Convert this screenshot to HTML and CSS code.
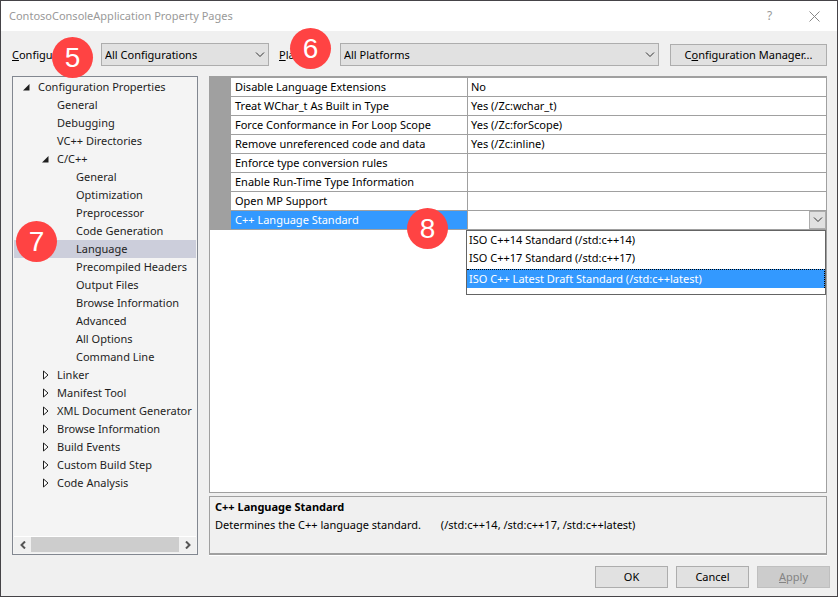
FILE: index.html
```
<!DOCTYPE html>
<html lang="en">
<head>
    <meta charset="utf-8">
    <meta name="viewport" content="width=device-width, initial-scale=1">
    <title>ContosoConsoleApplication Property Pages</title>
    <link rel="stylesheet" href="styles.css">
</head>
<body>
    <div class="dialog">
        <header class="titlebar">
            <h1>ContosoConsoleApplication Property Pages</h1>
            <button type="button" class="caption-btn" aria-label="Help">?</button>
            <button type="button" class="caption-btn" aria-label="Close">
                <svg width="11" height="11" viewBox="0 0 11 11"><path d="M0.5 0.5l10 10M10.5 0.5l-10 10"/></svg>
            </button>
        </header>

        <div class="toolbar">
            <div class="field-label config-label">
                <label for="configuration"><u>C</u>onfiguration:</label>
                <span class="badge badge-5">5</span>
            </div>
            <div class="combo config-combo">
                <select id="configuration">
                    <option>All Configurations</option>
                </select>
                <svg class="chevron" width="10" height="6" viewBox="0 0 10 6"><path d="M1 0.5l4 4 4-4"/></svg>
            </div>
            <div class="field-label platform-label">
                <label for="platform"><u>P</u>latform:</label>
                <span class="badge badge-6">6</span>
            </div>
            <div class="combo platform-combo">
                <select id="platform">
                    <option>All Platforms</option>
                </select>
                <svg class="chevron" width="10" height="6" viewBox="0 0 10 6"><path d="M1 0.5l4 4 4-4"/></svg>
            </div>
            <button type="button" class="btn manager-btn">C<u>o</u>nfiguration Manager...</button>
        </div>

        <main class="content">
            <nav class="tree" aria-label="Property pages">
                <ul class="tree-list">
                    <li class="level-0 open"><button type="button" class="toggle" aria-label="Collapse"></button>Configuration Properties</li>
                    <li class="level-1 leaf">General</li>
                    <li class="level-1 leaf">Debugging</li>
                    <li class="level-1 leaf">VC++ Directories</li>
                    <li class="level-1 open"><button type="button" class="toggle" aria-label="Collapse"></button>C/C++</li>
                    <li class="level-2 leaf">General</li>
                    <li class="level-2 leaf">Optimization</li>
                    <li class="level-2 leaf">Preprocessor</li>
                    <li class="level-2 leaf">Code Generation</li>
                    <li class="level-2 leaf selected">Language<span class="badge badge-7">7</span></li>
                    <li class="level-2 leaf">Precompiled Headers</li>
                    <li class="level-2 leaf">Output Files</li>
                    <li class="level-2 leaf">Browse Information</li>
                    <li class="level-2 leaf">Advanced</li>
                    <li class="level-2 leaf">All Options</li>
                    <li class="level-2 leaf">Command Line</li>
                    <li class="level-1 closed"><button type="button" class="toggle" aria-label="Expand"></button>Linker</li>
                    <li class="level-1 closed"><button type="button" class="toggle" aria-label="Expand"></button>Manifest Tool</li>
                    <li class="level-1 closed"><button type="button" class="toggle" aria-label="Expand"></button>XML Document Generator</li>
                    <li class="level-1 closed"><button type="button" class="toggle" aria-label="Expand"></button>Browse Information</li>
                    <li class="level-1 closed"><button type="button" class="toggle" aria-label="Expand"></button>Build Events</li>
                    <li class="level-1 closed"><button type="button" class="toggle" aria-label="Expand"></button>Custom Build Step</li>
                    <li class="level-1 closed"><button type="button" class="toggle" aria-label="Expand"></button>Code Analysis</li>
                </ul>
                <div class="scrollbar">
                    <button type="button" class="scroll-btn" aria-label="Scroll left">
                        <svg width="6" height="8" viewBox="0 0 6 8"><path d="M5 0.5L1.5 4 5 7.5"/></svg>
                    </button>
                    <div class="scroll-thumb"></div>
                    <button type="button" class="scroll-btn" aria-label="Scroll right">
                        <svg width="6" height="8" viewBox="0 0 6 8"><path d="M1 0.5L4.5 4 1 7.5"/></svg>
                    </button>
                </div>
            </nav>

            <div class="panes">
                <section class="grid-pane">
                    <table class="props">
                        <tr>
                            <td class="gutter"></td>
                            <th scope="row">Disable Language Extensions</th>
                            <td>No</td>
                        </tr>
                        <tr>
                            <td class="gutter"></td>
                            <th scope="row">Treat WChar_t As Built in Type</th>
                            <td>Yes (/Zc:wchar_t)</td>
                        </tr>
                        <tr>
                            <td class="gutter"></td>
                            <th scope="row">Force Conformance in For Loop Scope</th>
                            <td>Yes (/Zc:forScope)</td>
                        </tr>
                        <tr>
                            <td class="gutter"></td>
                            <th scope="row">Remove unreferenced code and data</th>
                            <td>Yes (/Zc:inline)</td>
                        </tr>
                        <tr>
                            <td class="gutter"></td>
                            <th scope="row">Enforce type conversion rules</th>
                            <td></td>
                        </tr>
                        <tr>
                            <td class="gutter"></td>
                            <th scope="row">Enable Run-Time Type Information</th>
                            <td></td>
                        </tr>
                        <tr>
                            <td class="gutter"></td>
                            <th scope="row">Open MP Support</th>
                            <td></td>
                        </tr>
                        <tr class="active">
                            <td class="gutter"></td>
                            <th scope="row"><label for="standard">C++ Language Standard</label><span class="badge badge-8">8</span></th>
                            <td class="editor">
                                <div class="editor-row">
                                    <input type="text" id="standard" value="">
                                    <button type="button" class="drop-btn" aria-label="Show options">
                                        <svg width="10" height="6" viewBox="0 0 10 6"><path d="M1 0.5l4 4 4-4"/></svg>
                                    </button>
                                </div>
                                <ul class="dropdown" role="listbox" aria-label="C++ Language Standard">
                                    <li role="option">ISO C++14 Standard (/std:c++14)</li>
                                    <li role="option">ISO C++17 Standard (/std:c++17)</li>
                                    <li role="option" class="current" aria-selected="true">ISO C++ Latest Draft Standard (/std:c++latest)</li>
                                </ul>
                            </td>
                        </tr>
                    </table>
                </section>

                <section class="description">
                    <h2>C++ Language Standard</h2>
                    <p>Determines the C++ language standard. <span class="switches">(/std:c++14, /std:c++17, /std:c++latest)</span></p>
                </section>
            </div>
        </main>

        <footer class="actions">
            <button type="button" class="btn">OK</button>
            <button type="button" class="btn">Cancel</button>
            <button type="button" class="btn" disabled><u>A</u>pply</button>
        </footer>
    </div>
</body>
</html>
```
FILE: styles.css
```
* {
    box-sizing: border-box;
}
body {
    margin: 0;
    font-family: "Noto Sans", "Open Sans", sans-serif;
    font-size: 11px;
    line-height: 18px;
    color: #000;
}
button, select, input {
    font: inherit;
    color: inherit;
    margin: 0;
    padding: 0;
    border-radius: 0;
}
ul {
    list-style: none;
    margin: 0;
    padding: 0;
}
svg {
    display: block;
    fill: none;
    stroke: #333;
}
.dialog {
    display: flex;
    flex-direction: column;
    min-height: 100vh;
    background: #f0f0f0;
    border: 1px solid #454347;
}

/* title bar */
.titlebar {
    display: flex;
    align-items: center;
    height: 30px;
    padding-left: 8px;
    background: #fff;
    color: #999;
}
.titlebar h1 {
    flex: 1;
    margin: 0;
    font-size: 11px;
    font-weight: 400;
}
.caption-btn {
    display: flex;
    align-items: center;
    justify-content: center;
    width: 45px;
    height: 30px;
    border: none;
    background: none;
    font-size: 12px;
}
.caption-btn svg {
    stroke: #888;
}

/* configuration and platform row */
.toolbar {
    display: flex;
    align-items: center;
    padding: 12px 10px 10px 11px;
}
.field-label {
    position: relative;
}
.config-label {
    width: 89px;
}
.platform-label {
    width: 61px;
    margin-left: 10px;
}
.combo {
    position: relative;
}
.config-combo {
    width: 168px;
}
.platform-combo {
    flex: 1;
    margin-right: 11px;
}
.combo select {
    display: block;
    width: 100%;
    height: 23px;
    padding: 0 20px 0 3px;
    border: 1px solid #adadad;
    background: #e1e1e1;
    appearance: none;
}
.chevron {
    position: absolute;
    top: 9px;
    right: 4px;
    pointer-events: none;
}
.btn {
    width: 73px;
    height: 22px;
    border: 1px solid #adadad;
    background: #e1e1e1;
    line-height: 20px;
}
.btn:disabled {
    background: #ccc;
    border-color: #bfbfbf;
    color: #838383;
}
.manager-btn {
    width: 157px;
}

/* tree */
.content {
    flex: 1;
    display: flex;
    gap: 11px;
    padding: 0 10px 0 11px;
}
.tree {
    display: flex;
    flex-direction: column;
    flex: none;
    width: 186px;
    padding: 1px;
    border: 1px solid #828790;
    background: #f4f4f4;
    color: #1e1e1e;
}
.tree-list {
    flex: 1;
}
.tree-list li {
    position: relative;
    display: flex;
    height: 18px;
    white-space: nowrap;
}
.level-0 {
    padding-left: 9px;
}
.level-1 {
    padding-left: 28px;
}
.level-1.leaf {
    padding-left: 43px;
}
.level-2.leaf {
    padding-left: 62px;
}
.tree-list .selected {
    background: #cccedb;
}
.toggle {
    width: 15px;
    height: 18px;
    border: none;
    background: no-repeat 0 6px;
}
.open .toggle {
    background-image: url("data:image/svg+xml,%3Csvg xmlns='http://www.w3.org/2000/svg' width='7' height='7'%3E%3Cpath d='M6.5 0v6.5H0z' fill='%231e1e1e'/%3E%3C/svg%3E");
}
.closed .toggle {
    background-position: 1px 4px;
    background-image: url("data:image/svg+xml,%3Csvg xmlns='http://www.w3.org/2000/svg' width='6' height='10'%3E%3Cpath d='M0.5 1v8L5 5z' fill='white' stroke='%231e1e1e'/%3E%3C/svg%3E");
}
.scrollbar {
    display: flex;
    height: 17px;
    padding-bottom: 1px;
    border-top: 1px solid #fff;
    background: #f0f0f0;
}
.scroll-btn {
    display: flex;
    align-items: center;
    justify-content: center;
    width: 17px;
    border: none;
    background: none;
}
.scroll-btn svg {
    stroke: #555;
    stroke-width: 2;
}
.scroll-thumb {
    flex: 1;
    background: #cdcdcd;
}

/* property grid */
.panes {
    flex: 1;
    display: flex;
    flex-direction: column;
    gap: 3px;
    min-width: 0;
}
.grid-pane {
    flex: 1;
    border: 1px solid #a0a0a0;
    border-top-width: 2px;
    background: #fff;
}
.props {
    width: 100%;
    table-layout: fixed;
    border-spacing: 0;
}
.props th, .props td {
    height: 19px;
    padding: 0 4px;
    border-bottom: 1px solid #a0a0a0;
    font-weight: 400;
    text-align: left;
    white-space: nowrap;
}
.props th {
    position: relative;
    width: 236px;
}
.props td {
    padding-left: 3px;
    border-left: 1px solid #a0a0a0;
}
.props .gutter {
    width: 21px;
    padding: 0;
    border-left: none;
    background: #a0a0a0;
}
.props .active th {
    background: #3399ff;
    color: #fff;
}
.props .editor {
    position: relative;
    padding: 0;
}
.editor-row {
    display: flex;
    height: 18px;
}
.editor-row input {
    flex: 1;
    min-width: 0;
    padding: 0 4px;
    border: none;
    outline: none;
    background: #fff;
}
.drop-btn {
    display: flex;
    align-items: center;
    justify-content: center;
    width: 17px;
    border: 1px solid #adadad;
    background: #e1e1e1;
}
.dropdown {
    position: absolute;
    top: calc(100% + 1px);
    left: -2px;
    right: 0;
    padding-bottom: 6px;
    border: 1px solid #646464;
    background: #fff;
}
.dropdown li {
    padding-left: 2px;
}
.dropdown .current {
    margin-top: 2px;
    border-top: 1px dotted #000;
    border-right: 1px dotted #000;
    background: #3399ff;
    color: #fff;
}

/* description */
.description {
    min-height: 59px;
    padding: 1px 5px;
    border: 1px solid #a0a0a0;
    border-bottom-width: 2px;
    box-shadow: 0 1px #fff;
}
.description h2 {
    margin: 0;
    font-size: 11px;
    font-weight: 700;
}
.description p {
    margin: 0;
}
.switches {
    margin-left: 17px;
}

.actions {
    display: flex;
    justify-content: flex-end;
    gap: 8px;
    padding: 11px 7px 8px;
}

/* numbered callouts */
.badge {
    position: absolute;
    z-index: 1;
    width: 41px;
    height: 41px;
    border-radius: 50%;
    background: #ff4343;
    color: #fff;
    font-family: "Liberation Sans", Arial, sans-serif;
    font-size: 28px;
    line-height: 41px;
    text-align: center;
}
.badge-5 {
    top: -9px;
    left: 40px;
}
.badge-6 {
    top: -18px;
    left: 11px;
}
.badge-7 {
    top: -19px;
    left: 2px;
}
.badge-8 {
    top: -3px;
    right: 19px;
}
```
